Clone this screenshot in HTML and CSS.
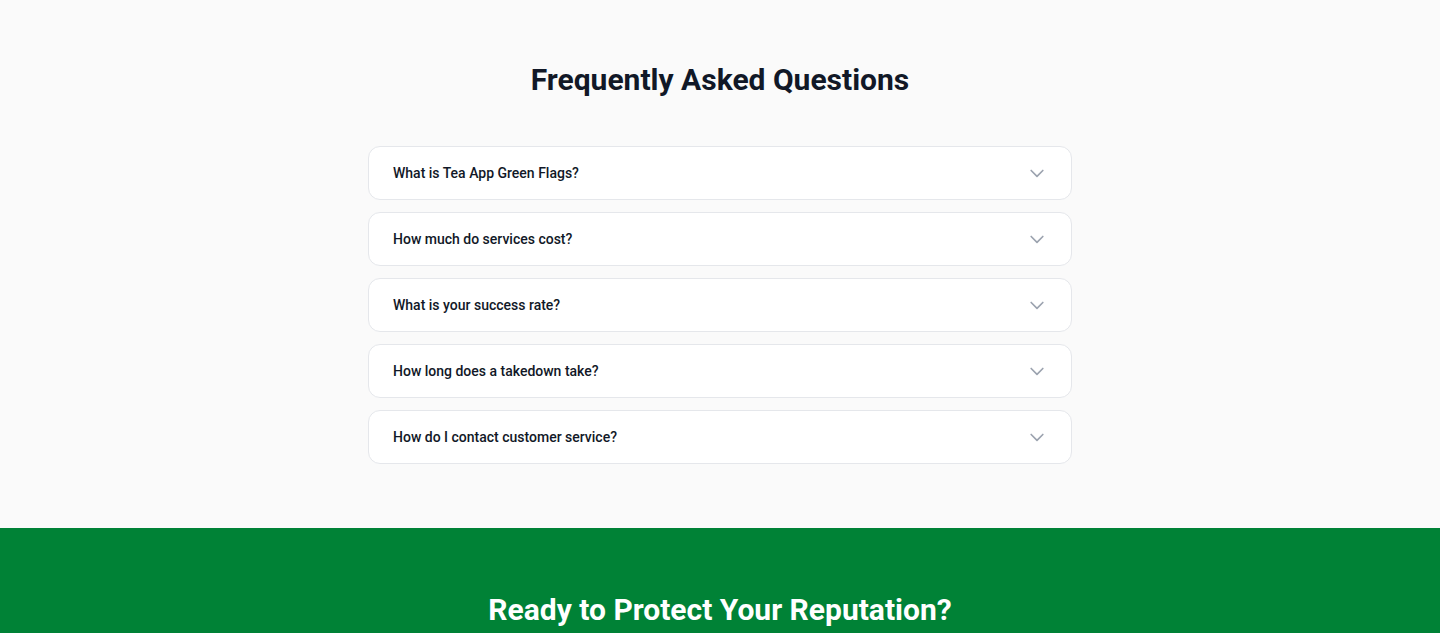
FILE: index.html
```html
<!DOCTYPE html>
<html lang="en">
<head>
<meta charset="utf-8">
<title>FAQ</title>
<link rel="stylesheet" href="styles.css">
</head>
<body>
<section class="faq">
  <h2 class="faq-title">Frequently Asked Questions</h2>
  <div class="faq-list">
    <div class="faq-item"><span class="faq-q">What is Tea App Green Flags?</span><svg class="chev" viewBox="0 0 24 24" fill="none" stroke="currentColor" stroke-width="2" stroke-linecap="round" stroke-linejoin="round"><path d="M19 9l-7 7-7-7"/></svg></div>
    <div class="faq-item"><span class="faq-q">How much do services cost?</span><svg class="chev" viewBox="0 0 24 24" fill="none" stroke="currentColor" stroke-width="2" stroke-linecap="round" stroke-linejoin="round"><path d="M19 9l-7 7-7-7"/></svg></div>
    <div class="faq-item"><span class="faq-q">What is your success rate?</span><svg class="chev" viewBox="0 0 24 24" fill="none" stroke="currentColor" stroke-width="2" stroke-linecap="round" stroke-linejoin="round"><path d="M19 9l-7 7-7-7"/></svg></div>
    <div class="faq-item"><span class="faq-q">How long does a takedown take?</span><svg class="chev" viewBox="0 0 24 24" fill="none" stroke="currentColor" stroke-width="2" stroke-linecap="round" stroke-linejoin="round"><path d="M19 9l-7 7-7-7"/></svg></div>
    <div class="faq-item"><span class="faq-q">How do I contact customer service?</span><svg class="chev" viewBox="0 0 24 24" fill="none" stroke="currentColor" stroke-width="2" stroke-linecap="round" stroke-linejoin="round"><path d="M19 9l-7 7-7-7"/></svg></div>
  </div>
</section>
<section class="cta">
  <h2 class="cta-title">Ready to Protect Your Reputation?</h2>
</section>
</body>
</html>
```
FILE: styles.css
```css
* { box-sizing: border-box; }
html, body { margin: 0; padding: 0; }
body {
  font-family: Roboto, "Liberation Sans", Arial, sans-serif;
  background: #fafafa;
  color: #111827;
}
.faq {
  padding: 62px 16px 64px;
  display: flex;
  flex-direction: column;
  align-items: center;
}
.faq-title {
  margin: 0 0 48px;
  font-size: 30px;
  line-height: 36px;
  font-weight: 700;
  color: #111827;
  text-align: center;
}
.faq-list {
  width: 704px;
  display: flex;
  flex-direction: column;
  gap: 12px;
}
.faq-item {
  height: 54px;
  background: #ffffff;
  border: 1px solid #e5e7eb;
  border-radius: 12px;
  padding: 0 24px;
  display: flex;
  align-items: center;
  justify-content: space-between;
}
.faq-q {
  font-size: 14px;
  font-weight: 500;
  color: #111827;
}
.chev {
  width: 20px;
  height: 20px;
  color: #9ca3af;
  flex-shrink: 0;
}
.cta {
  background: #008236;
  padding: 64px 16px;
  text-align: center;
}
.cta-title {
  margin: 0;
  font-size: 30px;
  line-height: 36px;
  font-weight: 700;
  color: #ffffff;
}
```
